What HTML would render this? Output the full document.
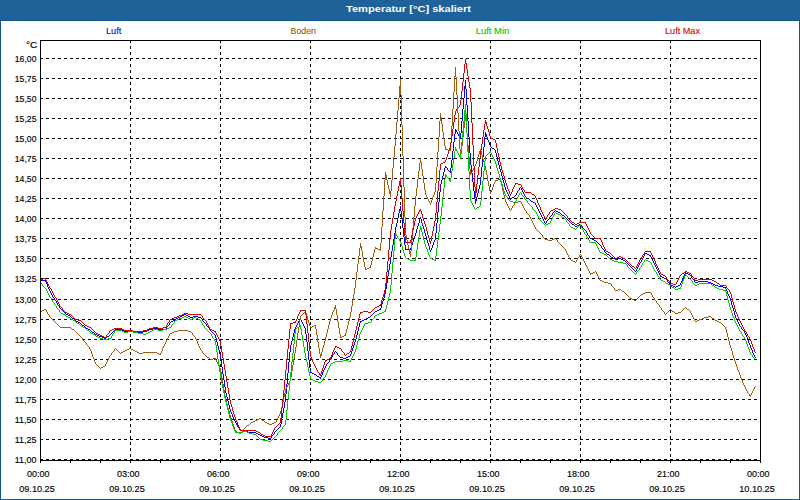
<!DOCTYPE html>
<html lang="de"><head><meta charset="utf-8"><title>Temperatur [°C] skaliert</title>
<style>html,body{margin:0;padding:0;background:#fff;overflow:hidden}body{width:800px;height:500px}svg{display:block}text{font-family:"Liberation Sans",sans-serif}</style></head><body>
<svg width="800" height="500" viewBox="0 0 800 500">
<rect x="0" y="0" width="800" height="500" fill="#ffffff"/>
<g shape-rendering="crispEdges">
<rect x="0" y="0" width="800" height="21" fill="#1f629a"/>
<rect x="0" y="20" width="800" height="1" fill="#0f5a92"/>
<rect x="0" y="20" width="1" height="480" fill="#0f5a92"/>
<rect x="799" y="20" width="1" height="480" fill="#0f5a92"/>
<rect x="0" y="499" width="800" height="1" fill="#0f5a92"/>
</g>
<text x="346" y="11.8" font-size="9.9" font-weight="bold" fill="#ffffff" textLength="125" lengthAdjust="spacingAndGlyphs">Temperatur [°C] skaliert</text>
<g font-size="9.6" stroke-width="0.12">
<text x="106" y="34" fill="#0000ff" stroke="#0000ff" textLength="15.2" lengthAdjust="spacingAndGlyphs">Luft</text>
<text x="290.5" y="34" fill="#9c5c0a" stroke="#9c5c0a" textLength="25.5" lengthAdjust="spacingAndGlyphs">Boden</text>
<text x="475.8" y="34" fill="#00c800" stroke="#00c800" textLength="33.4" lengthAdjust="spacingAndGlyphs">Luft Min</text>
<text x="665" y="34" fill="#d80000" stroke="#d80000" textLength="35" lengthAdjust="spacingAndGlyphs">Luft Max</text>
</g>
<g shape-rendering="crispEdges" stroke="#000" stroke-width="1" fill="none">
<line x1="40" y1="58.5" x2="760" y2="58.5" stroke-dasharray="3 3"/>
<line x1="40" y1="78.5" x2="760" y2="78.5" stroke-dasharray="3 3"/>
<line x1="40" y1="98.5" x2="760" y2="98.5" stroke-dasharray="3 3"/>
<line x1="40" y1="118.5" x2="760" y2="118.5" stroke-dasharray="3 3"/>
<line x1="40" y1="138.5" x2="760" y2="138.5" stroke-dasharray="3 3"/>
<line x1="40" y1="158.5" x2="760" y2="158.5" stroke-dasharray="3 3"/>
<line x1="40" y1="178.5" x2="760" y2="178.5" stroke-dasharray="3 3"/>
<line x1="40" y1="198.5" x2="760" y2="198.5" stroke-dasharray="3 3"/>
<line x1="40" y1="218.5" x2="760" y2="218.5" stroke-dasharray="3 3"/>
<line x1="40" y1="238.5" x2="760" y2="238.5" stroke-dasharray="3 3"/>
<line x1="40" y1="258.5" x2="760" y2="258.5" stroke-dasharray="3 3"/>
<line x1="40" y1="278.5" x2="760" y2="278.5" stroke-dasharray="3 3"/>
<line x1="40" y1="299.5" x2="760" y2="299.5" stroke-dasharray="3 3"/>
<line x1="40" y1="319.5" x2="760" y2="319.5" stroke-dasharray="3 3"/>
<line x1="40" y1="339.5" x2="760" y2="339.5" stroke-dasharray="3 3"/>
<line x1="40" y1="359.5" x2="760" y2="359.5" stroke-dasharray="3 3"/>
<line x1="40" y1="379.5" x2="760" y2="379.5" stroke-dasharray="3 3"/>
<line x1="40" y1="399.5" x2="760" y2="399.5" stroke-dasharray="3 3"/>
<line x1="40" y1="419.5" x2="760" y2="419.5" stroke-dasharray="3 3"/>
<line x1="40" y1="439.5" x2="760" y2="439.5" stroke-dasharray="3 3"/>
<line x1="40" y1="459.5" x2="760" y2="459.5" stroke-dasharray="3 3"/>
<line x1="130.5" y1="40" x2="130.5" y2="460" stroke-dasharray="3 3"/>
<line x1="220.5" y1="40" x2="220.5" y2="460" stroke-dasharray="3 3"/>
<line x1="310.5" y1="40" x2="310.5" y2="460" stroke-dasharray="3 3"/>
<line x1="400.5" y1="40" x2="400.5" y2="460" stroke-dasharray="3 3"/>
<line x1="490.5" y1="40" x2="490.5" y2="460" stroke-dasharray="3 3"/>
<line x1="580.5" y1="40" x2="580.5" y2="460" stroke-dasharray="3 3"/>
<line x1="670.5" y1="40" x2="670.5" y2="460" stroke-dasharray="3 3"/>
</g>
<g font-size="9.6" fill="#000" stroke="#000" stroke-width="0.15">
<text x="26" y="48" textLength="11.4" lengthAdjust="spacingAndGlyphs">°C</text>
<text x="14.8" y="62" textLength="21.7" lengthAdjust="spacingAndGlyphs">16,00</text>
<text x="14.8" y="82" textLength="21.7" lengthAdjust="spacingAndGlyphs">15,75</text>
<text x="14.8" y="102" textLength="21.7" lengthAdjust="spacingAndGlyphs">15,50</text>
<text x="14.8" y="122" textLength="21.7" lengthAdjust="spacingAndGlyphs">15,25</text>
<text x="14.8" y="142" textLength="21.7" lengthAdjust="spacingAndGlyphs">15,00</text>
<text x="14.8" y="162" textLength="21.7" lengthAdjust="spacingAndGlyphs">14,75</text>
<text x="14.8" y="182" textLength="21.7" lengthAdjust="spacingAndGlyphs">14,50</text>
<text x="14.8" y="202" textLength="21.7" lengthAdjust="spacingAndGlyphs">14,25</text>
<text x="14.8" y="222" textLength="21.7" lengthAdjust="spacingAndGlyphs">14,00</text>
<text x="14.8" y="242" textLength="21.7" lengthAdjust="spacingAndGlyphs">13,75</text>
<text x="14.8" y="262" textLength="21.7" lengthAdjust="spacingAndGlyphs">13,50</text>
<text x="14.8" y="282" textLength="21.7" lengthAdjust="spacingAndGlyphs">13,25</text>
<text x="14.8" y="303" textLength="21.7" lengthAdjust="spacingAndGlyphs">13,00</text>
<text x="14.8" y="323" textLength="21.7" lengthAdjust="spacingAndGlyphs">12,75</text>
<text x="14.8" y="343" textLength="21.7" lengthAdjust="spacingAndGlyphs">12,50</text>
<text x="14.8" y="363" textLength="21.7" lengthAdjust="spacingAndGlyphs">12,25</text>
<text x="14.8" y="383" textLength="21.7" lengthAdjust="spacingAndGlyphs">12,00</text>
<text x="14.8" y="403" textLength="21.7" lengthAdjust="spacingAndGlyphs">11,75</text>
<text x="14.8" y="423" textLength="21.7" lengthAdjust="spacingAndGlyphs">11,50</text>
<text x="14.8" y="443" textLength="21.7" lengthAdjust="spacingAndGlyphs">11,25</text>
<text x="14.8" y="463" textLength="21.7" lengthAdjust="spacingAndGlyphs">11,00</text>
<text x="27.0" y="477" textLength="22.5" lengthAdjust="spacingAndGlyphs">00:00</text>
<text x="19.2" y="492" textLength="35.6" lengthAdjust="spacingAndGlyphs">09.10.25</text>
<text x="117.0" y="477" textLength="22.5" lengthAdjust="spacingAndGlyphs">03:00</text>
<text x="109.2" y="492" textLength="35.6" lengthAdjust="spacingAndGlyphs">09.10.25</text>
<text x="207.0" y="477" textLength="22.5" lengthAdjust="spacingAndGlyphs">06:00</text>
<text x="199.2" y="492" textLength="35.6" lengthAdjust="spacingAndGlyphs">09.10.25</text>
<text x="297.0" y="477" textLength="22.5" lengthAdjust="spacingAndGlyphs">09:00</text>
<text x="289.2" y="492" textLength="35.6" lengthAdjust="spacingAndGlyphs">09.10.25</text>
<text x="387.0" y="477" textLength="22.5" lengthAdjust="spacingAndGlyphs">12:00</text>
<text x="379.2" y="492" textLength="35.6" lengthAdjust="spacingAndGlyphs">09.10.25</text>
<text x="477.0" y="477" textLength="22.5" lengthAdjust="spacingAndGlyphs">15:00</text>
<text x="469.2" y="492" textLength="35.6" lengthAdjust="spacingAndGlyphs">09.10.25</text>
<text x="567.0" y="477" textLength="22.5" lengthAdjust="spacingAndGlyphs">18:00</text>
<text x="559.2" y="492" textLength="35.6" lengthAdjust="spacingAndGlyphs">09.10.25</text>
<text x="657.0" y="477" textLength="22.5" lengthAdjust="spacingAndGlyphs">21:00</text>
<text x="649.2" y="492" textLength="35.6" lengthAdjust="spacingAndGlyphs">09.10.25</text>
<text x="747.0" y="477" textLength="22.5" lengthAdjust="spacingAndGlyphs">00:00</text>
<text x="739.2" y="492" textLength="35.6" lengthAdjust="spacingAndGlyphs">10.10.25</text>
</g>
<g shape-rendering="crispEdges" fill="none" stroke-width="1">
<path stroke="#0000ff" d="M464 86.5h2M464 87.5h2M464 88.5h2M455 130.5h2M455 131.5h2M485 134.5h2M485 135.5h2M459 136.5h2M485 136.5h2M459 137.5h2M492 148.5h2M445 167.5h2M449 171.5h2M512 197.5h2M510 198.5h2M527 198.5h2M475 199.5h2M475 200.5h2M531 201.5h2M533 202.5h2M399 209.5h2M399 210.5h2M556 211.5h2M558 212.5h2M562 215.5h2M572 224.5h2M579 224.5h2M577 225.5h2M575 226.5h2M590 238.5h2M592 239.5h2M594 240.5h2M405 249.5h6M645 253.5h2M607 254.5h2M647 254.5h2M649 255.5h2M611 257.5h2M613 258.5h2M618 258.5h3M615 259.5h3M621 259.5h2M623 260.5h2M685 273.5h3M688 274.5h2M660 276.5h2M662 277.5h2M664 278.5h2M40 280.5h6M698 281.5h10M695 282.5h3M708 282.5h3M711 283.5h2M713 284.5h2M671 285.5h2M678 285.5h2M715 285.5h3M673 286.5h2M676 286.5h2M718 286.5h5M723 287.5h3M379 309.5h2M377 310.5h2M375 311.5h2M66 314.5h2M184 314.5h2M68 315.5h2M182 315.5h2M186 315.5h2M180 316.5h2M188 316.5h2M193 316.5h5M178 317.5h2M190 317.5h3M198 317.5h3M368 317.5h2M72 318.5h2M176 318.5h2M366 318.5h2M299 319.5h2M364 319.5h2M173 320.5h2M362 320.5h2M76 321.5h2M171 321.5h2M360 321.5h2M78 322.5h2M82 325.5h2M86 328.5h2M153 328.5h5M88 329.5h2M115 329.5h7M149 329.5h4M158 329.5h8M122 330.5h2M128 330.5h5M147 330.5h2M124 331.5h4M133 331.5h5M143 331.5h4M92 332.5h2M138 332.5h5M95 334.5h2M97 335.5h2M99 336.5h3M107 336.5h2M102 337.5h2M104 338.5h2M348 356.5h2M340 357.5h3M346 357.5h2M343 358.5h3M310 372.5h2M312 373.5h2M314 374.5h2M317 376.5h2M319 377.5h2M240 430.5h3M243 431.5h5M248 432.5h8M256 433.5h2M258 434.5h2M260 435.5h2M262 436.5h2M264 437.5h4M268 438.5h3M45.5 281v1M46.5 282v2M47.5 284v3M48.5 287v2M49.5 289v2M50.5 291v2M51.5 293v2M52.5 295v2M53.5 297v1M54.5 298v2M55.5 300v1M56.5 301v2M57.5 303v2M58.5 305v1M59.5 306v2M60.5 308v1M61.5 309v1M62.5 310v1M63.5 311v1M64.5 312v1M65.5 313v1M70.5 316v1M71.5 317v1M74.5 319v1M75.5 320v1M80.5 323v1M81.5 324v1M84.5 326v1M85.5 327v1M90.5 330v1M91.5 331v1M94.5 333v1M106.5 337v1M109.5 335v1M110.5 334v1M111.5 333v1M112.5 332v1M113.5 331v1M114.5 330v1M166.5 327v2M167.5 326v1M168.5 325v1M169.5 323v2M170.5 322v1M175.5 319v1M201.5 318v1M202.5 319v2M203.5 321v1M204.5 322v1M205.5 323v1M206.5 324v2M207.5 326v1M208.5 327v1M209.5 328v2M210.5 330v1M211.5 331v1M212.5 332v1M213.5 333v1M214.5 334v1M215.5 335v3M216.5 338v4M217.5 342v4M218.5 346v4M219.5 350v4M220.5 354v6M221.5 360v7M222.5 367v7M223.5 374v6M224.5 380v7M225.5 387v6M226.5 393v4M227.5 397v4M228.5 401v4M229.5 405v4M230.5 409v3M231.5 412v2M232.5 414v3M233.5 417v2M234.5 419v2M235.5 421v2M236.5 423v2M237.5 425v2M238.5 427v1M239.5 428v2M271.5 436v2M272.5 435v1M273.5 434v1M274.5 432v2M275.5 431v1M276.5 430v1M277.5 429v1M278.5 428v1M279.5 427v1M280.5 424v3M281.5 418v6M282.5 413v5M283.5 408v5M284.5 402v6M285.5 394v8M286.5 384v10M287.5 373v11M288.5 362v11M289.5 352v10M290.5 345v7M291.5 341v4M292.5 337v4M293.5 333v4M294.5 329v4M295.5 327v2M296.5 325v2M297.5 323v2M298.5 321v2M299.5 320v1M300.5 318v1M301.5 320v2M302.5 322v2M303.5 324v2M304.5 326v2M305.5 328v6M306.5 334v8M307.5 342v9M308.5 351v9M309.5 360v8M310.5 368v4M316.5 375v1M320.5 378v1M321.5 375v2M322.5 372v3M323.5 370v2M324.5 368v2M325.5 366v2M326.5 364v2M327.5 363v1M328.5 362v1M329.5 360v2M330.5 359v1M331.5 357v2M332.5 355v2M333.5 354v1M334.5 352v2M335.5 351v1M336.5 352v1M337.5 353v2M338.5 355v1M339.5 356v1M350.5 354v2M351.5 351v3M352.5 348v3M353.5 345v3M354.5 342v3M355.5 339v3M356.5 335v4M357.5 331v4M358.5 327v4M359.5 323v4M360.5 322v1M370.5 316v1M371.5 315v1M372.5 314v1M373.5 313v1M374.5 312v1M380.5 308v1M381.5 304v4M382.5 301v3M383.5 298v3M384.5 294v4M385.5 289v5M386.5 283v6M387.5 276v7M388.5 270v6M389.5 264v6M390.5 257v7M391.5 251v6M392.5 245v6M393.5 239v6M394.5 233v6M395.5 227v6M396.5 223v4M397.5 218v5M398.5 213v5M399.5 211v2M400.5 206v3M401.5 211v8M402.5 219v9M403.5 228v9M404.5 237v8M405.5 245v4M410.5 248v1M411.5 245v3M412.5 242v3M413.5 239v3M414.5 236v3M415.5 233v3M416.5 229v4M417.5 226v3M418.5 223v3M419.5 219v4M420.5 217v2M421.5 219v4M422.5 223v3M423.5 226v3M424.5 229v4M425.5 233v3M426.5 236v4M427.5 240v3M428.5 243v3M429.5 246v4M430.5 250v2M431.5 248v2M432.5 245v3M433.5 242v3M434.5 240v2M435.5 233v7M436.5 223v10M437.5 212v11M438.5 202v10M439.5 192v10M440.5 184v8M441.5 180v4M442.5 176v4M443.5 172v4M444.5 168v4M445.5 166v1M447.5 168v2M448.5 170v1M450.5 168v3M450.5 172v1M451.5 160v8M452.5 151v9M453.5 142v9M454.5 134v8M455.5 129v1M455.5 132v2M457.5 132v2M458.5 134v2M460.5 133v3M460.5 138v1M461.5 121v12M462.5 109v12M463.5 98v11M464.5 89v9M465.5 80v6M466.5 89v16M467.5 105v16M468.5 121v16M469.5 137v16M470.5 153v12M471.5 165v8M472.5 173v9M473.5 182v9M474.5 191v8M475.5 201v3M476.5 197v2M477.5 193v4M478.5 189v4M479.5 185v4M480.5 177v8M481.5 167v10M482.5 157v10M483.5 147v10M484.5 137v10M485.5 132v2M487.5 137v3M488.5 140v2M489.5 142v3M490.5 145v2M491.5 147v1M494.5 149v1M495.5 150v3M496.5 153v4M497.5 157v4M498.5 161v4M499.5 165v4M500.5 169v3M501.5 172v4M502.5 176v4M503.5 180v3M504.5 183v4M505.5 187v3M506.5 190v2M507.5 192v2M508.5 194v2M509.5 196v2M510.5 199v1M514.5 196v1M515.5 195v1M516.5 193v2M517.5 191v2M518.5 190v1M519.5 188v2M520.5 187v1M521.5 188v2M522.5 190v2M523.5 192v2M524.5 194v2M525.5 196v1M526.5 197v1M529.5 199v1M530.5 200v1M535.5 203v2M536.5 205v2M537.5 207v2M538.5 209v2M539.5 211v2M540.5 213v2M541.5 215v2M542.5 217v2M543.5 219v2M544.5 221v2M545.5 223v1M546.5 221v2M547.5 220v1M548.5 219v1M549.5 217v2M550.5 216v1M551.5 215v1M552.5 213v2M553.5 212v1M554.5 211v1M555.5 210v1M560.5 213v1M561.5 214v1M564.5 216v1M565.5 217v1M566.5 218v1M567.5 219v1M568.5 220v1M569.5 221v1M570.5 222v1M571.5 223v1M574.5 225v1M581.5 225v1M582.5 226v2M583.5 228v1M584.5 229v1M585.5 230v1M586.5 231v2M587.5 233v2M588.5 235v1M589.5 236v2M596.5 241v1M597.5 242v1M598.5 243v1M599.5 244v1M600.5 245v1M601.5 246v2M602.5 248v1M603.5 249v1M604.5 250v2M605.5 252v1M606.5 253v1M609.5 255v1M610.5 256v1M625.5 261v1M626.5 262v1M627.5 263v1M628.5 264v1M629.5 265v1M630.5 266v1M631.5 267v1M632.5 268v1M633.5 269v1M634.5 270v1M635.5 271v1M636.5 269v2M637.5 267v2M638.5 265v2M639.5 263v2M640.5 262v1M641.5 260v2M642.5 258v2M643.5 256v2M644.5 254v2M650.5 256v1M651.5 257v2M652.5 259v2M653.5 261v2M654.5 263v2M655.5 265v2M656.5 267v2M657.5 269v2M658.5 271v2M659.5 273v2M660.5 275v1M666.5 279v1M667.5 280v2M668.5 282v1M669.5 283v1M670.5 284v1M675.5 287v1M680.5 283v2M681.5 281v2M682.5 278v3M683.5 276v2M684.5 274v2M685.5 272v1M690.5 275v1M691.5 276v2M692.5 278v1M693.5 279v1M694.5 280v2M725.5 288v1M726.5 289v2M727.5 291v3M728.5 294v2M729.5 296v2M730.5 298v3M731.5 301v4M732.5 305v3M733.5 308v3M734.5 311v4M735.5 315v3M736.5 318v2M737.5 320v2M738.5 322v2M739.5 324v2M740.5 326v1M741.5 327v2M742.5 329v1M743.5 330v1M744.5 331v2M745.5 333v2M746.5 335v2M747.5 337v3M748.5 340v3M749.5 343v2M750.5 345v3M751.5 348v2M752.5 350v3M753.5 353v2M754.5 355v2M755.5 357v1"/>
<path stroke="#9c5c0a" d="M454 76.5h2M399 86.5h2M399 87.5h2M399 88.5h2M399 89.5h2M399 90.5h2M399 91.5h2M399 92.5h2M399 93.5h2M399 94.5h2M440 117.5h2M440 118.5h2M440 119.5h2M440 120.5h2M464 120.5h2M445 149.5h3M460 149.5h2M448 150.5h3M460 150.5h2M460 151.5h2M460 152.5h2M460 153.5h2M420 162.5h2M470 172.5h2M470 173.5h2M385 175.5h2M385 176.5h2M385 177.5h2M385 178.5h2M385 179.5h2M498 179.5h3M495 180.5h3M389 191.5h2M490 191.5h2M389 192.5h2M389 193.5h2M518 201.5h3M515 202.5h3M554 238.5h2M545 239.5h3M552 239.5h2M548 240.5h4M360 246.5h2M360 247.5h2M375 248.5h3M378 249.5h3M409 251.5h2M409 252.5h2M409 253.5h2M571 260.5h2M573 261.5h2M369 267.5h2M367 268.5h2M365 269.5h2M593 272.5h2M590 273.5h3M600 280.5h2M602 281.5h2M604 282.5h4M608 283.5h3M618 289.5h3M615 290.5h3M622 291.5h2M645 292.5h6M643 293.5h2M641 294.5h2M630 298.5h2M632 299.5h2M634 300.5h2M334 307.5h2M334 308.5h2M44 309.5h2M687 309.5h2M42 310.5h2M40 311.5h2M672 311.5h2M304 312.5h2M678 312.5h3M675 313.5h3M708 316.5h3M704 317.5h4M702 318.5h2M712 318.5h2M699 319.5h3M697 320.5h2M715 320.5h2M695 321.5h2M717 321.5h2M719 322.5h2M314 325.5h2M312 326.5h2M60 327.5h11M310 327.5h2M72 329.5h2M178 330.5h10M174 331.5h4M188 331.5h3M172 332.5h2M170 333.5h2M344 335.5h2M342 336.5h2M340 337.5h2M129 348.5h2M127 349.5h2M131 349.5h2M125 350.5h2M133 350.5h2M123 351.5h2M135 351.5h2M121 352.5h2M137 352.5h2M143 352.5h14M139 353.5h4M157 353.5h2M159 354.5h2M320 354.5h2M320 355.5h2M207 357.5h2M213 358.5h3M210 359.5h3M103 366.5h2M101 367.5h2M749 395.5h2M259 418.5h2M257 419.5h2M255 420.5h2M262 420.5h2M253 421.5h2M251 422.5h2M265 422.5h2M274 422.5h2M267 423.5h2M272 423.5h2M269 424.5h3M247 425.5h2M235 431.5h2M237 432.5h2M239 433.5h2M46.5 310v2M47.5 312v2M48.5 314v1M49.5 315v2M50.5 317v1M51.5 318v1M52.5 319v1M53.5 320v1M54.5 321v1M55.5 322v1M56.5 323v1M57.5 324v1M58.5 325v1M59.5 326v1M71.5 328v1M74.5 330v1M75.5 331v1M76.5 332v1M77.5 333v1M78.5 334v1M79.5 335v1M80.5 336v1M81.5 337v1M82.5 338v2M83.5 340v1M84.5 341v1M85.5 342v1M86.5 343v2M87.5 345v1M88.5 346v1M89.5 347v2M90.5 349v2M91.5 351v3M92.5 354v3M93.5 357v2M94.5 359v3M95.5 362v2M96.5 364v1M97.5 365v1M98.5 366v1M99.5 367v1M100.5 368v1M105.5 364v2M106.5 362v2M107.5 360v2M108.5 358v2M109.5 356v2M110.5 355v1M111.5 353v2M112.5 352v1M113.5 351v1M114.5 349v2M115.5 348v1M116.5 349v1M117.5 350v1M118.5 351v1M119.5 352v1M120.5 353v1M160.5 353v1M161.5 351v2M162.5 348v3M163.5 346v2M164.5 344v2M165.5 342v2M166.5 340v2M167.5 338v2M168.5 336v2M169.5 334v2M191.5 332v1M192.5 333v2M193.5 335v1M194.5 336v1M195.5 337v2M196.5 339v2M197.5 341v3M198.5 344v2M199.5 346v2M200.5 348v2M201.5 350v1M202.5 351v2M203.5 353v1M204.5 354v1M205.5 355v1M206.5 356v1M209.5 358v1M215.5 359v1M216.5 360v2M217.5 362v2M218.5 364v2M219.5 366v2M220.5 368v4M221.5 372v6M222.5 378v6M223.5 384v6M224.5 390v6M225.5 396v4M226.5 400v4M227.5 404v4M228.5 408v3M229.5 411v4M230.5 415v3M231.5 418v3M232.5 421v3M233.5 424v3M234.5 427v3M235.5 430v1M241.5 432v1M242.5 430v2M243.5 429v1M244.5 428v1M245.5 427v1M246.5 426v1M249.5 424v1M250.5 423v1M261.5 419v1M264.5 421v1M276.5 420v2M277.5 418v2M278.5 416v2M279.5 414v2M280.5 411v3M281.5 407v4M282.5 402v5M283.5 397v5M284.5 393v4M285.5 389v4M286.5 387v2M287.5 385v2M288.5 383v2M289.5 381v2M290.5 377v4M291.5 371v6M292.5 365v6M293.5 359v6M294.5 353v6M295.5 347v6M296.5 340v7M297.5 333v7M298.5 327v6M299.5 320v7M300.5 316v4M301.5 315v1M302.5 314v1M303.5 313v1M305.5 311v1M306.5 313v3M307.5 316v4M308.5 320v3M309.5 323v3M310.5 326v1M315.5 326v3M316.5 329v6M317.5 335v7M318.5 342v6M319.5 348v6M320.5 356v2M321.5 352v2M322.5 348v4M323.5 345v3M324.5 341v4M325.5 337v4M326.5 333v4M327.5 329v4M328.5 325v4M329.5 321v4M330.5 318v3M331.5 315v3M332.5 312v3M333.5 310v2M334.5 309v1M335.5 305v2M336.5 309v6M337.5 315v7M338.5 322v6M339.5 328v6M340.5 334v3M345.5 333v2M346.5 329v4M347.5 325v4M348.5 321v4M349.5 317v4M350.5 312v5M351.5 306v6M352.5 300v6M353.5 294v6M354.5 288v6M355.5 280v8M356.5 272v8M357.5 264v8M358.5 256v8M359.5 248v8M360.5 243v3M361.5 248v3M362.5 251v6M363.5 257v5M364.5 262v5M365.5 267v2M370.5 265v2M371.5 261v4M372.5 257v4M373.5 253v4M374.5 249v4M375.5 247v1M380.5 243v6M380.5 250v1M381.5 227v16M382.5 211v16M383.5 196v15M384.5 180v16M385.5 172v3M387.5 180v5M388.5 185v4M389.5 189v2M390.5 194v3M391.5 180v11M392.5 168v12M393.5 157v11M394.5 146v11M395.5 134v12M396.5 122v12M397.5 110v12M398.5 98v12M399.5 95v3M400.5 79v7M401.5 95v30M402.5 125v31M403.5 156v31M404.5 187v30M405.5 217v18M406.5 235v5M407.5 240v5M408.5 245v4M409.5 249v2M410.5 254v3M411.5 240v11M412.5 228v12M413.5 217v11M414.5 206v11M415.5 196v10M416.5 188v8M417.5 179v9M418.5 171v8M419.5 163v8M420.5 158v4M421.5 163v6M422.5 169v7M423.5 176v7M424.5 183v7M425.5 190v5M426.5 195v2M427.5 197v2M428.5 199v2M429.5 201v2M430.5 203v2M431.5 200v3M432.5 197v3M433.5 195v2M434.5 192v3M435.5 183v9M436.5 167v16M437.5 152v15M438.5 137v15M439.5 121v16M440.5 113v4M441.5 121v3M442.5 124v8M443.5 132v7M444.5 139v7M445.5 146v3M450.5 142v8M451.5 126v16M452.5 109v17M453.5 92v17M454.5 77v15M455.5 67v9M456.5 77v18M457.5 95v18M458.5 113v18M459.5 131v18M460.5 154v5M461.5 146v3M462.5 137v9M463.5 128v9M464.5 121v7M465.5 115v5M466.5 121v12M467.5 133v12M468.5 145v12M469.5 157v12M470.5 169v3M470.5 174v1M472.5 170v2M473.5 168v2M474.5 166v2M475.5 164v2M476.5 161v3M477.5 157v4M478.5 154v3M479.5 151v3M480.5 149v2M481.5 151v4M482.5 155v4M483.5 159v3M484.5 162v4M485.5 166v4M486.5 170v5M487.5 175v6M488.5 181v5M489.5 186v5M490.5 192v2M491.5 190v1M492.5 187v3M493.5 184v3M494.5 182v2M495.5 181v1M500.5 180v2M501.5 182v4M502.5 186v5M503.5 191v4M504.5 195v4M505.5 199v3M506.5 202v2M507.5 204v2M508.5 206v2M509.5 208v2M510.5 210v1M511.5 208v2M512.5 206v2M513.5 205v1M514.5 203v2M521.5 202v2M522.5 204v2M523.5 206v2M524.5 208v2M525.5 210v1M526.5 211v2M527.5 213v1M528.5 214v1M529.5 215v2M530.5 217v2M531.5 219v2M532.5 221v2M533.5 223v2M534.5 225v2M535.5 227v2M536.5 229v1M537.5 230v1M538.5 231v1M539.5 232v1M540.5 233v1M541.5 234v1M542.5 235v2M543.5 237v1M544.5 238v1M556.5 239v1M557.5 240v2M558.5 242v1M559.5 243v1M560.5 244v1M561.5 245v1M562.5 246v1M563.5 247v1M564.5 248v1M565.5 249v2M566.5 251v2M567.5 253v2M568.5 255v2M569.5 257v2M570.5 259v1M575.5 262v1M576.5 260v2M577.5 258v2M578.5 257v1M579.5 255v2M580.5 254v1M581.5 255v2M582.5 257v2M583.5 259v2M584.5 261v2M585.5 263v2M586.5 265v2M587.5 267v2M588.5 269v2M589.5 271v2M590.5 274v1M595.5 271v1M596.5 272v2M597.5 274v2M598.5 276v2M599.5 278v2M611.5 284v2M612.5 286v1M613.5 287v1M614.5 288v2M621.5 290v1M624.5 292v1M625.5 293v1M626.5 294v1M627.5 295v1M628.5 296v1M629.5 297v1M636.5 299v1M637.5 298v1M638.5 297v1M639.5 296v1M640.5 295v1M651.5 293v2M652.5 295v2M653.5 297v1M654.5 298v2M655.5 300v1M656.5 301v2M657.5 303v1M658.5 304v1M659.5 305v2M660.5 307v1M661.5 308v2M662.5 310v1M663.5 311v1M664.5 312v2M665.5 314v1M666.5 313v1M667.5 312v1M668.5 311v1M669.5 310v1M670.5 309v1M671.5 310v1M674.5 312v1M681.5 311v1M682.5 310v1M683.5 309v1M684.5 308v1M685.5 307v1M686.5 308v1M689.5 310v1M690.5 311v2M691.5 313v2M692.5 315v2M693.5 317v2M694.5 319v2M711.5 317v1M714.5 319v1M721.5 323v1M722.5 324v1M723.5 325v1M724.5 326v1M725.5 327v2M726.5 329v4M727.5 333v4M728.5 337v4M729.5 341v4M730.5 345v3M731.5 348v3M732.5 351v4M733.5 355v3M734.5 358v3M735.5 361v3M736.5 364v3M737.5 367v3M738.5 370v2M739.5 372v3M740.5 375v3M741.5 378v2M742.5 380v3M743.5 383v2M744.5 385v2M745.5 387v2M746.5 389v2M747.5 391v2M748.5 393v1M749.5 394v1M750.5 396v1M751.5 393v2M752.5 391v2M753.5 389v2M754.5 387v2M755.5 386v1"/>
<path stroke="#00c800" d="M464 110.5h2M464 111.5h2M464 112.5h2M464 113.5h2M455 149.5h2M455 150.5h2M489 152.5h2M459 155.5h2M459 156.5h2M445 175.5h2M445 176.5h2M449 179.5h2M449 180.5h2M510 201.5h3M513 202.5h3M477 207.5h2M556 213.5h2M558 214.5h2M562 217.5h2M548 223.5h2M546 224.5h2M579 225.5h2M571 227.5h2M420 228.5h2M573 228.5h2M420 229.5h2M395 234.5h2M395 235.5h2M590 242.5h6M600 252.5h2M602 253.5h2M604 254.5h2M406 258.5h2M430 258.5h2M408 259.5h2M432 259.5h2M610 259.5h2M410 260.5h6M434 260.5h2M612 260.5h2M646 260.5h2M614 261.5h4M648 261.5h2M618 262.5h5M623 263.5h3M685 275.5h2M661 280.5h2M663 281.5h2M666 283.5h2M699 283.5h12M668 284.5h2M697 284.5h2M695 285.5h2M712 285.5h2M672 287.5h2M715 287.5h2M678 288.5h3M717 288.5h2M675 289.5h3M719 289.5h4M723 290.5h3M384 311.5h2M382 312.5h2M61 313.5h2M379 313.5h3M63 314.5h2M377 314.5h2M375 315.5h2M66 316.5h2M184 316.5h2M68 317.5h2M182 317.5h2M186 317.5h2M194 317.5h2M179 318.5h3M188 318.5h2M192 318.5h2M196 318.5h2M71 319.5h2M177 319.5h2M190 319.5h2M198 319.5h2M73 320.5h2M175 320.5h2M368 322.5h3M77 323.5h2M365 323.5h3M81 326.5h2M299 326.5h2M83 327.5h2M169 327.5h2M297 327.5h2M167 328.5h2M154 329.5h4M163 329.5h4M87 330.5h2M115 330.5h7M152 330.5h2M158 330.5h5M122 331.5h2M128 331.5h5M150 331.5h2M124 332.5h4M133 332.5h5M148 332.5h2M91 333.5h2M138 333.5h5M146 333.5h2M93 334.5h2M143 334.5h3M96 336.5h2M98 337.5h2M100 338.5h3M108 338.5h3M103 339.5h5M343 360.5h5M335 361.5h8M348 361.5h3M333 362.5h2M331 363.5h2M311 379.5h2M313 380.5h2M315 381.5h3M318 382.5h3M243 431.5h4M235 432.5h8M247 432.5h2M249 433.5h4M253 434.5h3M260 439.5h3M263 440.5h5M268 441.5h3M40.5 282v1M41.5 283v1M42.5 284v2M43.5 286v1M44.5 287v1M45.5 288v1M46.5 289v2M47.5 291v2M48.5 293v2M49.5 295v2M50.5 297v1M51.5 298v2M52.5 300v2M53.5 302v1M54.5 303v2M55.5 305v1M56.5 306v2M57.5 308v1M58.5 309v1M59.5 310v2M60.5 312v1M65.5 315v1M70.5 318v1M75.5 321v1M76.5 322v1M79.5 324v1M80.5 325v1M85.5 328v1M86.5 329v1M89.5 331v1M90.5 332v1M95.5 335v1M111.5 336v2M112.5 334v2M113.5 333v1M114.5 331v2M171.5 325v2M172.5 324v1M173.5 323v1M174.5 321v2M200.5 320v1M201.5 321v2M202.5 323v2M203.5 325v1M204.5 326v2M205.5 328v1M206.5 329v1M207.5 330v1M208.5 331v1M209.5 332v1M210.5 333v1M211.5 334v2M212.5 336v2M213.5 338v1M214.5 339v2M215.5 341v4M216.5 345v7M217.5 352v7M218.5 359v6M219.5 365v7M220.5 372v6M221.5 378v5M222.5 383v5M223.5 388v5M224.5 393v5M225.5 398v4M226.5 402v4M227.5 406v4M228.5 410v4M229.5 414v4M230.5 418v3M231.5 421v2M232.5 423v3M233.5 426v3M234.5 429v2M235.5 431v1M256.5 435v1M257.5 436v1M258.5 437v1M259.5 438v1M271.5 440v1M272.5 439v1M273.5 438v1M274.5 437v1M275.5 436v1M276.5 435v1M277.5 433v2M278.5 432v1M279.5 431v1M280.5 430v1M281.5 429v1M282.5 427v2M283.5 426v1M284.5 425v1M285.5 420v5M286.5 410v10M287.5 400v10M288.5 391v9M289.5 381v10M290.5 372v9M291.5 362v10M292.5 353v9M293.5 344v9M294.5 334v10M295.5 329v5M296.5 328v1M300.5 325v1M300.5 327v2M301.5 329v6M302.5 335v6M303.5 341v6M304.5 347v6M305.5 353v5M306.5 358v4M307.5 362v5M308.5 367v5M309.5 372v4M310.5 376v3M321.5 381v1M322.5 379v2M323.5 378v1M324.5 377v1M325.5 375v2M326.5 373v2M327.5 370v3M328.5 368v2M329.5 366v2M330.5 364v2M350.5 360v1M351.5 358v2M352.5 356v2M353.5 354v2M354.5 352v2M355.5 349v3M356.5 345v4M357.5 341v4M358.5 338v3M359.5 334v4M360.5 332v2M361.5 330v2M362.5 328v2M363.5 326v2M364.5 324v2M371.5 320v2M372.5 319v1M373.5 318v1M374.5 316v2M385.5 309v2M386.5 305v4M387.5 301v4M388.5 297v4M389.5 293v4M390.5 285v8M391.5 273v12M392.5 262v11M393.5 251v11M394.5 239v12M395.5 233v1M395.5 236v3M397.5 236v2M398.5 238v1M399.5 239v2M400.5 241v2M401.5 243v3M402.5 246v4M403.5 250v3M404.5 253v3M405.5 256v2M415.5 257v3M416.5 250v7M417.5 243v7M418.5 237v6M419.5 230v7M420.5 226v2M421.5 230v2M422.5 232v4M423.5 236v4M424.5 240v4M425.5 244v3M426.5 247v2M427.5 249v3M428.5 252v3M429.5 255v2M430.5 257v1M435.5 256v4M436.5 248v8M437.5 240v8M438.5 232v8M439.5 224v8M440.5 216v8M441.5 207v9M442.5 197v10M443.5 188v9M444.5 179v9M445.5 174v1M445.5 177v2M447.5 177v1M448.5 178v1M450.5 178v1M450.5 181v1M451.5 171v7M452.5 164v7M453.5 158v6M454.5 151v7M455.5 147v2M457.5 151v2M458.5 153v2M460.5 153v2M460.5 157v2M461.5 142v11M462.5 131v11M463.5 121v10M464.5 114v7M465.5 104v6M466.5 114v19M467.5 133v19M468.5 152v19M469.5 171v19M470.5 190v11M471.5 201v2M472.5 203v2M473.5 205v2M474.5 207v2M475.5 209v1M476.5 208v1M479.5 206v1M480.5 201v5M481.5 191v10M482.5 181v10M483.5 171v10M484.5 161v10M485.5 156v5M486.5 155v1M487.5 154v1M488.5 153v1M490.5 151v1M491.5 153v2M492.5 155v2M493.5 157v2M494.5 159v2M495.5 161v3M496.5 164v4M497.5 168v3M498.5 171v3M499.5 174v4M500.5 178v3M501.5 181v3M502.5 184v4M503.5 188v3M504.5 191v3M505.5 194v2M506.5 196v1M507.5 197v2M508.5 199v1M509.5 200v1M515.5 201v1M516.5 199v2M517.5 197v2M518.5 195v2M519.5 193v2M520.5 192v1M521.5 193v2M522.5 195v1M523.5 196v1M524.5 197v2M525.5 199v1M526.5 200v1M527.5 201v2M528.5 203v1M529.5 204v1M530.5 205v1M531.5 206v1M532.5 207v2M533.5 209v1M534.5 210v1M535.5 211v1M536.5 212v2M537.5 214v2M538.5 216v2M539.5 218v2M540.5 220v1M541.5 221v1M542.5 222v1M543.5 223v1M544.5 224v1M545.5 225v1M550.5 221v2M551.5 219v2M552.5 217v2M553.5 215v2M554.5 213v2M555.5 212v1M560.5 215v1M561.5 216v1M564.5 218v1M565.5 219v1M566.5 220v2M567.5 222v1M568.5 223v1M569.5 224v2M570.5 226v1M575.5 229v1M576.5 228v1M577.5 227v1M578.5 226v1M580.5 224v1M581.5 226v2M582.5 228v2M583.5 230v2M584.5 232v2M585.5 234v1M586.5 235v2M587.5 237v2M588.5 239v1M589.5 240v2M595.5 243v1M596.5 244v2M597.5 246v2M598.5 248v2M599.5 250v2M606.5 255v1M607.5 256v1M608.5 257v1M609.5 258v1M626.5 264v1M627.5 265v2M628.5 267v1M629.5 268v1M630.5 269v1M631.5 270v1M632.5 271v1M633.5 272v1M634.5 273v1M635.5 274v1M636.5 272v2M637.5 271v1M638.5 270v1M639.5 268v2M640.5 267v1M641.5 265v2M642.5 263v2M643.5 262v1M644.5 260v2M645.5 259v1M650.5 262v1M651.5 263v2M652.5 265v2M653.5 267v2M654.5 269v2M655.5 271v1M656.5 272v2M657.5 274v2M658.5 276v1M659.5 277v2M660.5 279v1M665.5 282v1M670.5 285v1M671.5 286v1M674.5 288v1M680.5 287v1M681.5 284v3M682.5 281v3M683.5 279v2M684.5 276v3M685.5 274v1M687.5 276v1M688.5 277v1M689.5 278v1M690.5 279v1M691.5 280v1M692.5 281v2M693.5 283v1M694.5 284v1M711.5 284v1M714.5 286v1M725.5 291v1M726.5 292v4M727.5 296v4M728.5 300v3M729.5 303v4M730.5 307v3M731.5 310v3M732.5 313v3M733.5 316v2M734.5 318v3M735.5 321v2M736.5 323v2M737.5 325v2M738.5 327v2M739.5 329v2M740.5 331v1M741.5 332v2M742.5 334v2M743.5 336v1M744.5 337v2M745.5 339v2M746.5 341v3M747.5 344v3M748.5 347v2M749.5 349v3M750.5 352v2M751.5 354v1M752.5 355v2M753.5 357v1M754.5 358v1"/>
<path stroke="#d80000" d="M465 63.5h2M485 122.5h2M485 123.5h2M491 138.5h2M493 139.5h2M443 162.5h2M441 163.5h2M399 181.5h2M399 182.5h2M399 183.5h2M515 183.5h3M399 184.5h2M518 184.5h3M475 187.5h2M475 188.5h2M475 189.5h2M475 190.5h2M475 191.5h2M475 192.5h2M525 192.5h6M532 194.5h2M555 208.5h3M553 209.5h2M558 209.5h3M419 210.5h2M551 210.5h2M545 218.5h2M572 222.5h2M579 222.5h7M577 223.5h2M575 224.5h2M595 238.5h6M429 241.5h2M405 242.5h6M606 251.5h2M645 251.5h6M608 252.5h2M619 256.5h2M617 257.5h2M621 257.5h2M615 258.5h2M623 258.5h2M632 266.5h2M685 271.5h2M687 272.5h2M682 273.5h2M689 273.5h2M661 274.5h2M663 275.5h2M43 278.5h3M40 279.5h3M698 279.5h14M695 280.5h3M712 280.5h2M714 281.5h2M670 283.5h3M717 283.5h2M673 284.5h3M720 285.5h6M379 305.5h2M377 306.5h2M375 307.5h2M300 310.5h6M363 311.5h5M65 312.5h2M360 312.5h3M368 312.5h3M67 313.5h2M184 313.5h4M69 314.5h2M182 314.5h2M188 314.5h13M179 315.5h3M177 316.5h2M174 317.5h3M172 318.5h2M75 319.5h3M170 319.5h2M78 320.5h3M293 322.5h3M290 323.5h3M85 325.5h2M87 326.5h2M89 327.5h2M153 327.5h5M163 327.5h3M114 328.5h8M149 328.5h4M158 328.5h5M112 329.5h2M122 329.5h2M147 329.5h2M210 329.5h2M110 330.5h2M124 330.5h9M143 330.5h4M212 330.5h2M133 331.5h10M214 331.5h2M96 333.5h2M98 334.5h2M100 335.5h2M102 336.5h2M104 337.5h2M335 346.5h2M337 347.5h2M339 348.5h2M347 353.5h2M329 358.5h2M327 359.5h2M325 360.5h2M319 374.5h2M240 430.5h16M256 431.5h2M258 432.5h2M261 434.5h2M263 435.5h2M265 436.5h6M45.5 279v1M46.5 280v2M47.5 282v2M48.5 284v2M49.5 286v2M50.5 288v1M51.5 289v2M52.5 291v2M53.5 293v2M54.5 295v2M55.5 297v1M56.5 298v2M57.5 300v2M58.5 302v2M59.5 304v2M60.5 306v1M61.5 307v1M62.5 308v2M63.5 310v1M64.5 311v1M71.5 315v1M72.5 316v1M73.5 317v1M74.5 318v1M81.5 321v1M82.5 322v1M83.5 323v1M84.5 324v1M91.5 328v1M92.5 329v1M93.5 330v1M94.5 331v1M95.5 332v1M106.5 335v2M107.5 334v1M108.5 333v1M109.5 331v2M166.5 325v2M167.5 323v2M168.5 322v1M169.5 320v2M201.5 315v1M202.5 316v2M203.5 318v1M204.5 319v1M205.5 320v1M206.5 321v2M207.5 323v2M208.5 325v2M209.5 327v2M215.5 332v1M216.5 333v2M217.5 335v2M218.5 337v2M219.5 339v2M220.5 341v5M221.5 346v6M222.5 352v6M223.5 358v6M224.5 364v6M225.5 370v6M226.5 376v6M227.5 382v6M228.5 388v6M229.5 394v6M230.5 400v4M231.5 404v3M232.5 407v4M233.5 411v3M234.5 414v3M235.5 417v3M236.5 420v2M237.5 422v3M238.5 425v2M239.5 427v2M240.5 429v1M260.5 433v1M271.5 434v2M272.5 432v2M273.5 430v2M274.5 428v2M275.5 427v1M276.5 426v1M277.5 425v1M278.5 424v1M279.5 423v1M280.5 418v5M281.5 408v10M282.5 399v9M283.5 390v9M284.5 380v10M285.5 370v10M286.5 360v10M287.5 349v11M288.5 339v10M289.5 329v10M290.5 324v5M295.5 321v1M296.5 319v2M297.5 316v3M298.5 314v2M299.5 312v2M300.5 311v1M305.5 311v4M306.5 315v9M307.5 324v9M308.5 333v9M309.5 342v9M310.5 351v6M311.5 357v2M312.5 359v3M313.5 362v2M314.5 364v2M315.5 366v2M316.5 368v2M317.5 370v2M318.5 372v1M319.5 373v1M320.5 375v1M321.5 371v3M322.5 368v3M323.5 365v3M324.5 362v3M325.5 361v1M330.5 357v1M331.5 355v2M332.5 352v3M333.5 350v2M334.5 348v2M335.5 347v1M341.5 349v2M342.5 351v1M343.5 352v1M344.5 353v2M345.5 355v1M346.5 354v1M349.5 352v1M350.5 350v2M351.5 346v4M352.5 342v4M353.5 338v4M354.5 334v4M355.5 330v4M356.5 326v4M357.5 322v4M358.5 318v4M359.5 314v4M360.5 313v1M371.5 311v1M372.5 310v1M373.5 309v1M374.5 308v1M380.5 304v1M381.5 300v4M382.5 297v3M383.5 294v3M384.5 290v4M385.5 283v7M386.5 272v11M387.5 261v11M388.5 250v11M389.5 239v11M390.5 230v9M391.5 224v6M392.5 218v6M393.5 212v6M394.5 206v6M395.5 201v5M396.5 196v5M397.5 191v5M398.5 186v5M399.5 185v1M400.5 178v3M401.5 185v13M402.5 198v13M403.5 211v12M404.5 223v13M405.5 236v6M410.5 240v2M411.5 235v5M412.5 230v5M413.5 226v4M414.5 221v5M415.5 218v3M416.5 216v2M417.5 214v2M418.5 212v2M419.5 211v1M420.5 209v1M421.5 211v3M422.5 214v4M423.5 218v3M424.5 221v3M425.5 224v3M426.5 227v4M427.5 231v4M428.5 235v3M429.5 238v3M430.5 242v2M431.5 236v5M432.5 231v5M433.5 226v5M434.5 221v5M435.5 213v8M436.5 202v11M437.5 191v11M438.5 181v10M439.5 170v11M440.5 164v6M445.5 160v2M446.5 157v3M447.5 154v3M448.5 151v3M449.5 148v3M450.5 143v5M451.5 136v7M452.5 129v7M453.5 122v7M454.5 115v7M455.5 111v4M456.5 109v2M457.5 108v1M458.5 107v1M459.5 105v2M460.5 100v5M461.5 91v9M462.5 82v9M463.5 73v9M464.5 64v9M465.5 59v4M466.5 64v5M467.5 69v7M468.5 76v6M469.5 82v6M470.5 88v14M471.5 102v21M472.5 123v22M473.5 145v21M474.5 166v21M475.5 193v5M476.5 184v3M477.5 175v9M478.5 167v8M479.5 158v9M480.5 150v8M481.5 144v6M482.5 137v7M483.5 130v7M484.5 124v6M485.5 120v2M486.5 124v2M487.5 126v3M488.5 129v3M489.5 132v4M490.5 136v2M495.5 140v3M496.5 143v5M497.5 148v5M498.5 153v4M499.5 157v5M500.5 162v4M501.5 166v4M502.5 170v3M503.5 173v3M504.5 176v4M505.5 180v3M506.5 183v3M507.5 186v3M508.5 189v2M509.5 191v3M510.5 194v2M511.5 192v2M512.5 189v3M513.5 187v2M514.5 185v2M515.5 184v1M521.5 185v2M522.5 187v2M523.5 189v1M524.5 190v2M531.5 193v1M534.5 195v1M535.5 196v2M536.5 198v2M537.5 200v3M538.5 203v2M539.5 205v2M540.5 207v3M541.5 210v2M542.5 212v2M543.5 214v2M544.5 216v2M545.5 219v1M546.5 217v1M547.5 215v2M548.5 214v1M549.5 212v2M550.5 211v1M561.5 210v1M562.5 211v1M563.5 212v1M564.5 213v1M565.5 214v1M566.5 215v1M567.5 216v2M568.5 218v1M569.5 219v1M570.5 220v1M571.5 221v1M574.5 223v1M585.5 223v1M586.5 224v2M587.5 226v2M588.5 228v2M589.5 230v2M590.5 232v2M591.5 234v1M592.5 235v1M593.5 236v1M594.5 237v1M600.5 239v1M601.5 240v2M602.5 242v3M603.5 245v2M604.5 247v2M605.5 249v2M610.5 253v1M611.5 254v1M612.5 255v1M613.5 256v1M614.5 257v1M625.5 259v1M626.5 260v1M627.5 261v1M628.5 262v1M629.5 263v1M630.5 264v1M631.5 265v1M634.5 267v1M635.5 268v1M636.5 266v2M637.5 264v2M638.5 262v2M639.5 260v2M640.5 259v1M641.5 257v2M642.5 255v2M643.5 254v1M644.5 252v2M650.5 252v1M651.5 253v2M652.5 255v2M653.5 257v2M654.5 259v2M655.5 261v3M656.5 264v2M657.5 266v2M658.5 268v2M659.5 270v2M660.5 272v2M665.5 276v1M666.5 277v2M667.5 279v1M668.5 280v1M669.5 281v2M676.5 282v2M677.5 280v2M678.5 278v2M679.5 276v2M680.5 275v1M681.5 274v1M684.5 272v1M691.5 274v2M692.5 276v1M693.5 277v1M694.5 278v2M716.5 282v1M719.5 284v1M726.5 286v2M727.5 288v1M728.5 289v1M729.5 290v2M730.5 292v2M731.5 294v4M732.5 298v4M733.5 302v3M734.5 305v4M735.5 309v3M736.5 312v2M737.5 314v3M738.5 317v2M739.5 319v2M740.5 321v2M741.5 323v2M742.5 325v2M743.5 327v2M744.5 329v2M745.5 331v1M746.5 332v2M747.5 334v2M748.5 336v1M749.5 337v2M750.5 339v2M751.5 341v3M752.5 344v3M753.5 347v2M754.5 349v3M755.5 352v1"/>
</g>
<g shape-rendering="crispEdges" stroke="#000" stroke-width="1" fill="none">
<rect x="40.5" y="40.5" width="720" height="420"/>
<line x1="40.5" y1="460" x2="40.5" y2="463"/>
<line x1="70.5" y1="460" x2="70.5" y2="463"/>
<line x1="100.5" y1="460" x2="100.5" y2="463"/>
<line x1="130.5" y1="460" x2="130.5" y2="463"/>
<line x1="160.5" y1="460" x2="160.5" y2="463"/>
<line x1="190.5" y1="460" x2="190.5" y2="463"/>
<line x1="220.5" y1="460" x2="220.5" y2="463"/>
<line x1="250.5" y1="460" x2="250.5" y2="463"/>
<line x1="280.5" y1="460" x2="280.5" y2="463"/>
<line x1="310.5" y1="460" x2="310.5" y2="463"/>
<line x1="340.5" y1="460" x2="340.5" y2="463"/>
<line x1="370.5" y1="460" x2="370.5" y2="463"/>
<line x1="400.5" y1="460" x2="400.5" y2="463"/>
<line x1="430.5" y1="460" x2="430.5" y2="463"/>
<line x1="460.5" y1="460" x2="460.5" y2="463"/>
<line x1="490.5" y1="460" x2="490.5" y2="463"/>
<line x1="520.5" y1="460" x2="520.5" y2="463"/>
<line x1="550.5" y1="460" x2="550.5" y2="463"/>
<line x1="580.5" y1="460" x2="580.5" y2="463"/>
<line x1="610.5" y1="460" x2="610.5" y2="463"/>
<line x1="640.5" y1="460" x2="640.5" y2="463"/>
<line x1="670.5" y1="460" x2="670.5" y2="463"/>
<line x1="700.5" y1="460" x2="700.5" y2="463"/>
<line x1="730.5" y1="460" x2="730.5" y2="463"/>
<line x1="760.5" y1="460" x2="760.5" y2="463"/>
</g>
</svg></body></html>
